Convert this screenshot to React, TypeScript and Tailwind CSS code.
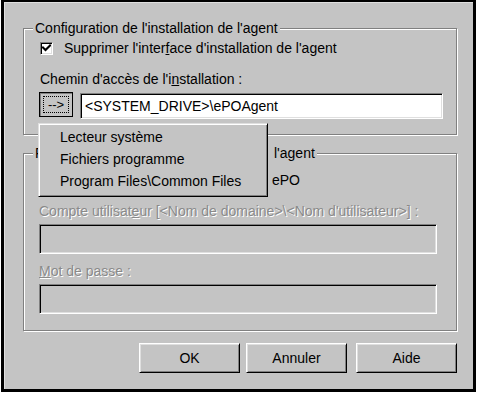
import React from "react";

const FONT = "font-['Liberation_Sans',Arial,sans-serif]";
const BG = "bg-[#c4c4c4]";

function Check() {
  return (
    <span className="w-[13px] h-[13px] shrink-0 bg-white border border-t-[#808080] border-l-[#808080] border-b-white border-r-white shadow-[inset_1px_1px_0_#000,inset_-1px_-1px_0_#dfdfdf] flex items-center justify-center">
      <svg width="9" height="9" viewBox="0 0 9 9">
        <path d="M1 3.5 L3.5 6 L8 1.5" fill="none" stroke="#000" strokeWidth="2" strokeLinecap="square" />
      </svg>
    </span>
  );
}

function Group({
  label,
  className,
  children,
}: {
  label: React.ReactNode;
  className: string;
  children: React.ReactNode;
}) {
  return (
    <div
      className={`relative border border-[#808080] shadow-[inset_1px_1px_0_#fff,1px_1px_0_#fff] ${className}`}
    >
      <div className={`absolute left-[9px] top-[-9px] px-[2px] ${BG} h-[16px] leading-[16px] flex whitespace-nowrap`}>
        {label}
      </div>
      {children}
    </div>
  );
}

function Sunken({ className, children }: { className: string; children?: React.ReactNode }) {
  return (
    <div
      className={`border border-t-[#808080] border-l-[#808080] border-b-white border-r-white shadow-[inset_1px_1px_0_#000,inset_-1px_-1px_0_#dfdfdf] ${className}`}
    >
      {children}
    </div>
  );
}

function Btn({ label, className }: { label: string; className: string }) {
  return (
    <div
      className={`w-[101px] h-[30px] flex items-center justify-center border border-t-white border-l-white border-r-black border-b-black shadow-[inset_1px_1px_0_#dfdfdf,inset_-1px_-1px_0_#808080] ${className}`}
    >
      {label}
    </div>
  );
}

const disabled = "text-[#8a8a8a] [text-shadow:1px_1px_0_#fff]";

export default function App() {
  return (
    <div className={`w-[479px] h-[395px] bg-white ${FONT} text-[14px] leading-[16px] text-black`}>
      <div
        className={`relative ml-[1px] w-[475px] h-[392px] ${BG} border-black border-t-[2px] border-l-[3px] border-r-[3px] border-b-[3px] shadow-[inset_1px_1px_0_#dfdfdf] pl-[19px] pr-[16px] pt-[26px] flex flex-col`}
      >
        {/* Group 1 */}
        <Group label={<span>Configuration de l'installation de l'agent</span>} className="h-[107px] pl-[16px] pr-[13px] flex flex-col">
          <div className="mt-[11px] h-[16px] flex items-center">
            <Check />
            <span className="ml-[11px]">
              Supprimer l'inter<span className="underline">f</span>ace d'installation de l'agent
            </span>
          </div>
          <div className="mt-[15px] h-[16px] flex items-center">
            Chemin d'accès de l'i<span className="underline">n</span>stallation :
          </div>
          <div className="mt-[5px] flex items-start">
            <div className="ml-[-1px] w-[34px] h-[25px] border border-black shadow-[inset_1px_1px_0_#808080] flex items-center justify-center">
              <div className="w-[26px] h-[17px] border border-dotted border-black flex items-center justify-center text-[13px] leading-none pb-[1px]">
                --&gt;
              </div>
            </div>
            <Sunken className="ml-[7px] mt-[1px] flex-1 h-[26px] bg-white flex items-center pl-[4px]">
              &lt;SYSTEM_DRIVE&gt;\ePOAgent
            </Sunken>
          </div>
        </Group>

        {/* Group 2 */}
        <Group
          label={
            <>
              <span className="w-[239px]">F</span>
              <span>l'agent</span>
            </>
          }
          className="mt-[18px] h-[178px] pl-[15px] pr-[19px] flex flex-col"
        >
          <div className="mt-[18px] h-[16px] flex items-center">
            <span className="ml-[1px]">
              <Check />
            </span>
            <span className="ml-[11px] w-[208px]" />
            <span>ePO</span>
          </div>
          <div className={`mt-[15px] h-[16px] flex items-center ${disabled}`}>
            Compte utilisat<span className="underline">e</span>ur [&lt;Nom de domaine&gt;\&lt;Nom d'utilisateur&gt;] :
          </div>
          <Sunken className="mt-[5px] h-[30px]" />
          <div className={`mt-[9px] h-[16px] flex items-center ${disabled}`}>
            <span className="underline">M</span>ot de passe :
          </div>
          <Sunken className="mt-[5px] h-[30px]" />
        </Group>

        {/* Buttons */}
        <div className="mt-[12px] flex justify-end">
          <Btn label="OK" className="" />
          <Btn label="Annuler" className="ml-[6px]" />
          <Btn label="Aide" className="ml-[9px]" />
        </div>

        {/* Popup menu */}
        <div
          className={`absolute left-[34px] top-[121px] w-[230px] h-[74px] ${BG} border border-t-[#dfdfdf] border-l-[#dfdfdf] border-r-black border-b-black shadow-[inset_1px_1px_0_#fff,inset_-1px_-1px_0_#808080] pt-[2px] pl-[21px] flex flex-col`}
        >
          <div className="h-[22px] flex items-center">Lecteur système</div>
          <div className="h-[22px] flex items-center">Fichiers programme</div>
          <div className="h-[22px] flex items-center">Program Files\Common Files</div>
        </div>
      </div>
    </div>
  );
}
